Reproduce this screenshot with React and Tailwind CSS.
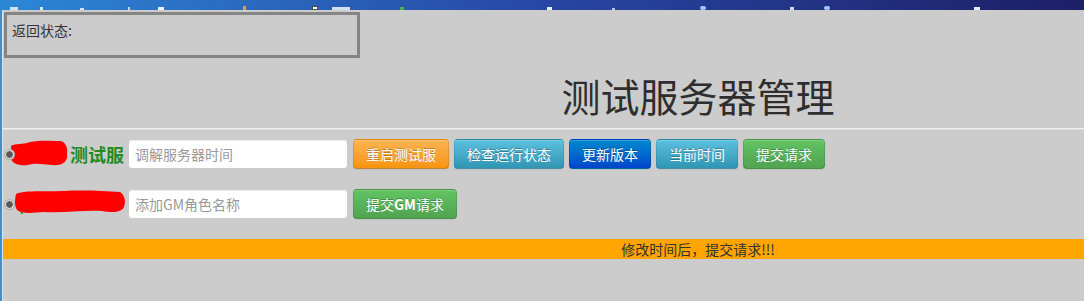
import React from "react";

function RedBlob({ w, h, d, className }) {
  return (
    <svg width={w} height={h} viewBox={`0 0 ${w} ${h}`} className={className}>
      <path d={d} fill="#ff0000" />
    </svg>
  );
}

function Radio() {
  return (
    <span className="relative z-10 block w-[9px] h-[9px] rounded-full bg-[#5a5a5a] border border-[#f2f2f2] shadow-[0_0_0_1px_#b0b0b0]" />
  );
}

const btnBase =
  "h-[30px] px-[12px] text-[14px] leading-[20px] text-white rounded-[4px] border border-black/10 border-b-black/25 bg-linear-to-b whitespace-nowrap [text-shadow:0_-1px_0_rgba(0,0,0,0.25)] shadow-[inset_0_1px_0_rgba(255,255,255,0.2),0_1px_2px_rgba(0,0,0,0.05)]";

const inputCls =
  "w-[220px] h-[30px] rounded-[4px] border border-[#cccccc] bg-white px-[6px] text-[14px] text-[#555] placeholder:text-[#999] shadow-[inset_0_1px_1px_rgba(0,0,0,0.075)] outline-none";

export default function App() {
  return (
    <div className="w-[1084px] h-[301px] overflow-hidden bg-[#cccccc] flex flex-col font-['Noto_Sans_CJK_SC','Noto_Sans',sans-serif]">
      {/* cropped taskbar */}
      <div className="relative h-[10px] shrink-0 bg-linear-to-r from-[#2c87d6] via-[#2747a4] to-[#1c1f66]">
        <span className="absolute left-[10px] bottom-0 w-[8px] h-[3px] bg-[#cfe3f5]" />
        <span className="absolute left-[40px] bottom-0 w-[3px] h-[3px] bg-white/80" />
        <span className="absolute left-[80px] bottom-0 w-[4px] h-[2px] bg-white/80" />
        <span className="absolute left-[128px] bottom-0 w-[2px] h-[3px] bg-white/70" />
        <span className="absolute left-[158px] bottom-0 w-[6px] h-[3px] bg-white/90" />
        <span className="absolute left-[243px] bottom-0 w-[3px] h-[4px] bg-[#f0a020]" />
        <span className="absolute left-[312px] bottom-0 w-[6px] h-[4px] bg-white border border-black/70" />
        <span className="absolute left-[332px] bottom-0 w-[18px] h-[3px] bg-white/80" />
        <span className="absolute left-[400px] bottom-0 w-[4px] h-[3px] bg-[#4caf50]" />
        <span className="absolute left-[547px] bottom-0 w-[5px] h-[3px] bg-white/90" />
        <span className="absolute left-[612px] bottom-0 w-[3px] h-[2px] bg-white/70" />
        <span className="absolute left-[700px] bottom-0 w-[6px] h-[4px] rounded-full bg-[#9ec6ff]" />
        <span className="absolute left-[790px] bottom-0 w-[4px] h-[3px] bg-white/80" />
        <span className="absolute left-[824px] bottom-0 w-[6px] h-[4px] rounded-full bg-[#9ec6ff]" />
        <span className="absolute left-[974px] bottom-0 w-[6px] h-[3px] bg-white/90" />
      </div>

      <div className="flex flex-1">
        <div className="w-[3px] shrink-0 flex">
          <div className="w-[2px] bg-[#3d8fd2]" />
          <div className="w-[1px] bg-[#d8e4ee]" />
        </div>

        <div className="w-[1390px] shrink-0 flex flex-col pt-[2px]">
          {/* status box */}
          <div className="ml-[1px] w-[356px] h-[46px] border-[3px] border-[#858585] pl-[5px] pt-[5px] text-[14px] leading-[20px] text-[#333]">
            返回状态:
          </div>

          {/* title */}
          <h1 className="mt-[18px] text-center text-[39px] leading-[39px] font-normal text-[#2e2e2e]">
            测试服务器管理
          </h1>

          <div className="mt-[13px] h-[2px] border-t border-[#f2f2f2] border-b border-b-[#dcdcdc]" />

          {/* row 1 */}
          <div className="mt-[9px] flex items-center h-[30px]">
            <div className="ml-[2px]">
              <Radio />
            </div>
            <div className="relative w-[114px] h-[30px] flex items-center justify-end pr-[4px]">
              <RedBlob
                w={58}
                h={26}
                className="absolute left-[-4px] top-[1px]"
                d="M1 6 C6 3 12 5 20 2 C30 0 42 1 50 1 C56 2 58 8 57 14 C58 19 55 24 48 25 C38 26 28 22 18 25 C9 26 3 24 1 19 C0 15 2 10 1 6 Z"
              />
              <span className="relative text-[18px] leading-[24px] font-bold text-[#228b22]">测试服</span>
            </div>
            <input className={inputCls} placeholder="调解服务器时间" />
            <div className="ml-[5px] flex gap-[5px]">
              <button className={`${btnBase} from-[#fbb450] to-[#f89406]`}>重启测试服</button>
              <button className={`${btnBase} from-[#5bc0de] to-[#2f96b4]`}>检查运行状态</button>
              <button className={`${btnBase} from-[#0088cc] to-[#0044cc]`}>更新版本</button>
              <button className={`${btnBase} from-[#5bc0de] to-[#2f96b4]`}>当前时间</button>
              <button className={`${btnBase} from-[#62c462] to-[#51a351]`}>提交请求</button>
            </div>
          </div>

          {/* row 2 */}
          <div className="mt-[20px] flex items-center h-[30px]">
            <div className="ml-[2px]">
              <Radio />
            </div>
            <div className="relative w-[114px] h-[30px]">
              <span className="absolute left-[4px] top-[14px] text-[12px] leading-[12px] font-bold text-[#228b22]">T</span>
              <RedBlob
                w={112}
                h={25}
                className="absolute left-0 top-0"
                d="M2 5 C10 1 30 3 50 2 C70 1 90 2 106 3 C111 6 112 13 110 18 C108 23 100 24 88 22 C70 21 50 24 30 23 C18 24 8 25 3 21 C0 16 1 10 2 5 Z"
              />
            </div>
            <input className={inputCls} placeholder="添加GM角色名称" />
            <button className={`ml-[5px] ${btnBase} from-[#62c462] to-[#51a351]`}>
              提交<span className="font-bold">GM</span>请求
            </button>
          </div>

          {/* notice bar */}
          <div className="mt-[20px] h-[20px] bg-[#ffa500] text-center text-[14px] leading-[20px] text-[#333]">
            修改时间后，提交请求!!!
          </div>
        </div>
      </div>
    </div>
  );
}
